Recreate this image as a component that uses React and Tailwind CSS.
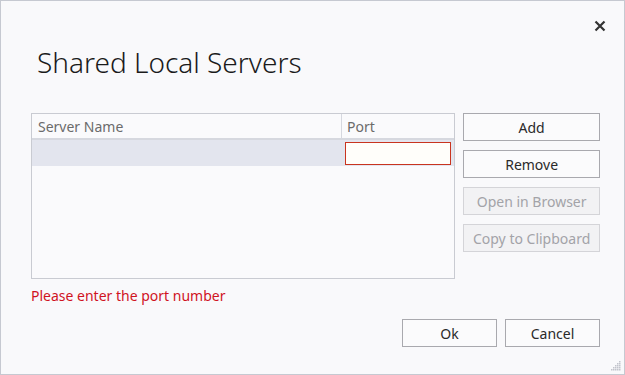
import React from "react";

const font = { fontFamily: '"Noto Sans", "Open Sans", sans-serif' };

function DialogButton({ children, disabled }) {
  return (
    <button
      disabled={disabled}
      className={
        disabled
          ? "h-[28px] w-full border border-[#d4d4d8] bg-[#f2f2f4] text-[14px] text-[#a3a3a8]"
          : "h-[28px] w-full border border-[#a9a9ae] bg-[#fbfbfc] text-[14px] text-[#2a2a2a]"
      }
    >
      {children}
    </button>
  );
}

export default function App() {
  return (
    <div
      className="w-[625px] h-[375px] bg-[#f9f9fb] border border-[#c6c9d1] flex flex-col relative overflow-hidden"
      style={font}
    >
      {/* Close */}
      <div className="flex justify-end pt-[19px] pr-[18px] h-[40px]">
        <svg width="12" height="12" viewBox="0 0 12 12">
          <path d="M1.5 1.5 L10.5 10.5 M10.5 1.5 L1.5 10.5" stroke="#333" strokeWidth="2.2" />
        </svg>
      </div>

      {/* Title */}
      <h1 className="pl-[36px] text-[28px] font-light text-[#1b1b1b] leading-[36px] mt-[3px]">
        Shared Local Servers
      </h1>

      {/* Body */}
      <div className="flex gap-[8px] pl-[30px] pr-[24px] mt-[33px]">
        <div className="w-[425px] h-[166px] border border-[#c9cbd2] bg-[#fafafc] flex flex-col">
          <div className="flex h-[26px] border-b-2 border-[#d6d8df] text-[14px] text-[#6b6b6b]">
            <div className="w-[310px] pl-[6px] leading-[26px] border-r border-[#d6d8df]">Server Name</div>
            <div className="flex-1 pl-[5px] leading-[26px]">Port</div>
          </div>
          <div className="flex h-[26px] bg-[#e3e5ee]">
            <div className="w-[311px]"></div>
            <div className="flex-1 flex items-center pl-[2px] pr-[3px]">
              <div className="h-[23px] w-full border border-[#c9341f] bg-[#fffefa]"></div>
            </div>
          </div>
        </div>

        <div className="w-[137px] flex flex-col gap-[9px]">
          <DialogButton>Add</DialogButton>
          <DialogButton>Remove</DialogButton>
          <DialogButton disabled>Open in Browser</DialogButton>
          <DialogButton disabled>Copy to Clipboard</DialogButton>
        </div>
      </div>

      <p className="pl-[30px] mt-[6px] text-[14px] text-[#d0131f]">Please enter the port number</p>

      {/* Footer */}
      <div className="flex justify-end gap-[8px] pr-[24px] mt-[13px]">
        <div className="w-[95px]">
          <DialogButton>Ok</DialogButton>
        </div>
        <div className="w-[95px]">
          <DialogButton>Cancel</DialogButton>
        </div>
      </div>

      {/* Resize grip */}
      <svg className="absolute right-[3px] bottom-[3px]" width="11" height="11" viewBox="0 0 11 11">
        {[
          [9, 1], [9, 3], [7, 3], [9, 5], [7, 5], [5, 5], [9, 7], [7, 7], [5, 7], [3, 7], [9, 9], [7, 9], [5, 9], [3, 9], [1, 9],
        ].map(([x, y], i) => (
          <rect key={i} x={x} y={y} width="1.5" height="1.5" fill="#c2c4cc" />
        ))}
      </svg>
    </div>
  );
}
